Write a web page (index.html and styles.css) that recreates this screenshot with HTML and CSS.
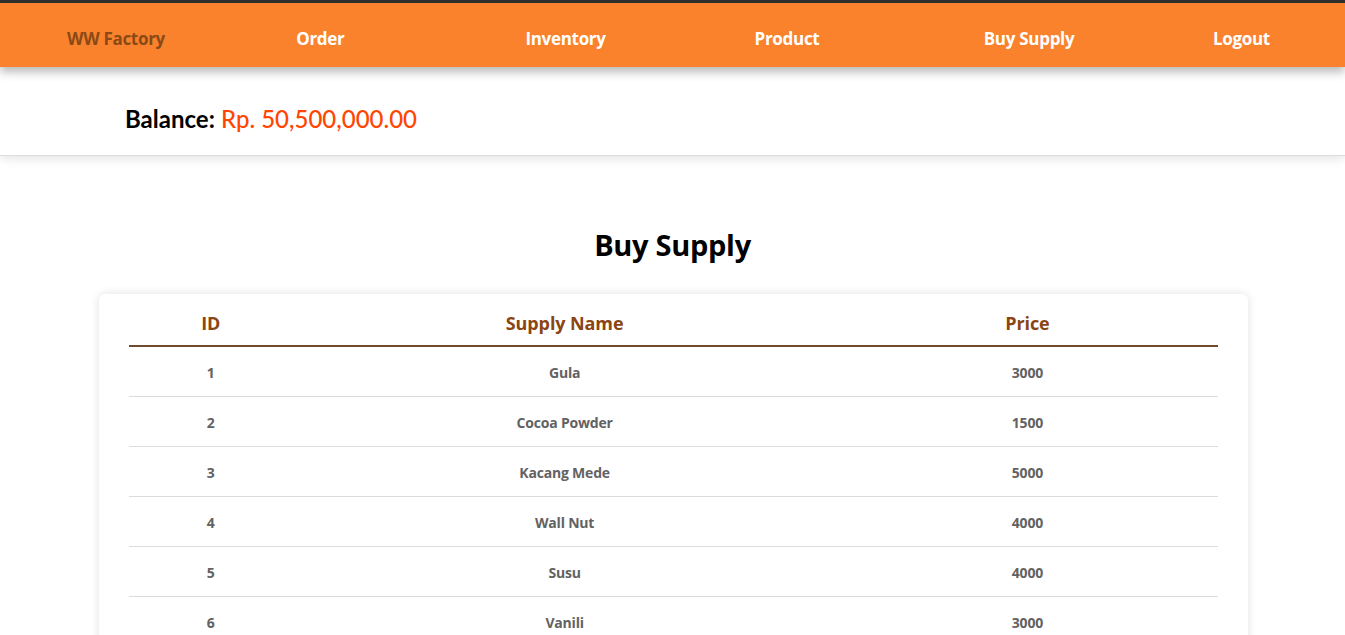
FILE: index.html
```html
<!DOCTYPE html>
<html lang="id">
<head>
<meta charset="utf-8">
<title>Buy Supply - WW Factory</title>
<link rel="stylesheet" href="styles.css">
</head>
<body>
<nav class="navbar">
  <a class="nav-brand" href="#">WW Factory</a>
  <a class="nav-link" href="#">Order</a>
  <a class="nav-link" href="#">Inventory</a>
  <a class="nav-link" href="#">Product</a>
  <a class="nav-link" href="#">Buy Supply</a>
  <a class="nav-link" href="#">Logout</a>
</nav>
<section class="balance-bar">
  <p class="balance"><span class="balance-label">Balance:</span> <span class="balance-amount">Rp. 50,500,000.00</span></p>
</section>
<main class="content">
  <h1 class="page-title">Buy Supply</h1>
  <div class="card">
    <table class="supply-table">
      <colgroup>
        <col class="col-id">
        <col class="col-name">
        <col class="col-price">
      </colgroup>
      <thead>
        <tr><th>ID</th><th>Supply Name</th><th>Price</th></tr>
      </thead>
      <tbody>
        <tr><td>1</td><td>Gula</td><td>3000</td></tr>
        <tr><td>2</td><td>Cocoa Powder</td><td>1500</td></tr>
        <tr><td>3</td><td>Kacang Mede</td><td>5000</td></tr>
        <tr><td>4</td><td>Wall Nut</td><td>4000</td></tr>
        <tr><td>5</td><td>Susu</td><td>4000</td></tr>
        <tr><td>6</td><td>Vanili</td><td>3000</td></tr>
      </tbody>
    </table>
  </div>
</main>
</body>
</html>
```

FILE: styles.css
```css
* { box-sizing: border-box; }
html, body { margin: 0; padding: 0; }
body {
  background: #ffffff;
  font-family: "Open Sans", "Noto Sans", sans-serif;
  color: #000;
}
.navbar {
  display: grid;
  grid-template-columns: repeat(5, 229.2px) 1fr;
  padding: 9px 0 0 67px;
  align-items: center;
  height: 67px;
  background: #fa822d;
  border-top: 3px solid #2e2e2e;
  box-shadow: 0 5px 9px rgba(0, 0, 0, 0.28);
  position: relative;
  z-index: 2;
}
.nav-brand, .nav-link {
  text-decoration: none;
  font-weight: 700;
  font-size: 17px;
  letter-spacing: -0.3px;
  line-height: 24px;
  padding-bottom: 2px;
}
.nav-brand { color: #8a4a17; }
.nav-link { color: #ffffff; }
.balance-bar {
  height: 89px;
  background: #fff;
  display: flex;
  align-items: center;
  padding: 15px 0 0 125px;
  box-shadow: 0 2px 10px rgba(0, 0, 0, 0.12);
  border-bottom: 1px solid #dcdcdc;
  position: relative;
  z-index: 1;
}
.balance {
  margin: 0;
  font-family: "Lato", sans-serif;
  font-size: 24px;
}
.balance-label { font-weight: 700; }
.balance-amount { color: #ff4500; font-weight: 500; }
.content {
  padding: 70px 0 0;
}
.page-title {
  margin: 0;
  text-align: center;
  font-size: 29px;
  font-weight: 700;
  letter-spacing: -0.3px;
  line-height: 38px;
}
.card {
  margin: 30px 97px 0 99px;
  background: #fff;
  border-radius: 6px;
  box-shadow: 0 0 10px rgba(0, 0, 0, 0.12);
  padding: 8px 30px 20px;
}
.supply-table {
  width: 100%;
  border-collapse: collapse;
  table-layout: fixed;
}
.col-id { width: 15%; }
.col-name { width: 50%; }
.col-price { width: 35%; }
.supply-table th {
  height: 44px;
  font-size: 18px;
  font-weight: 700;
  color: #8b4513;
  letter-spacing: -0.1px;
  text-align: center;
  border-bottom: 2px solid #6e4a2f;
  padding: 0 0 2px;
}
.supply-table td {
  height: 50px;
  text-align: center;
  font-size: 14px;
  font-weight: 700;
  color: #626262;
  letter-spacing: -0.2px;
  border-bottom: 1px solid #dcdcdc;
  padding: 2px 0 0;
}
```
